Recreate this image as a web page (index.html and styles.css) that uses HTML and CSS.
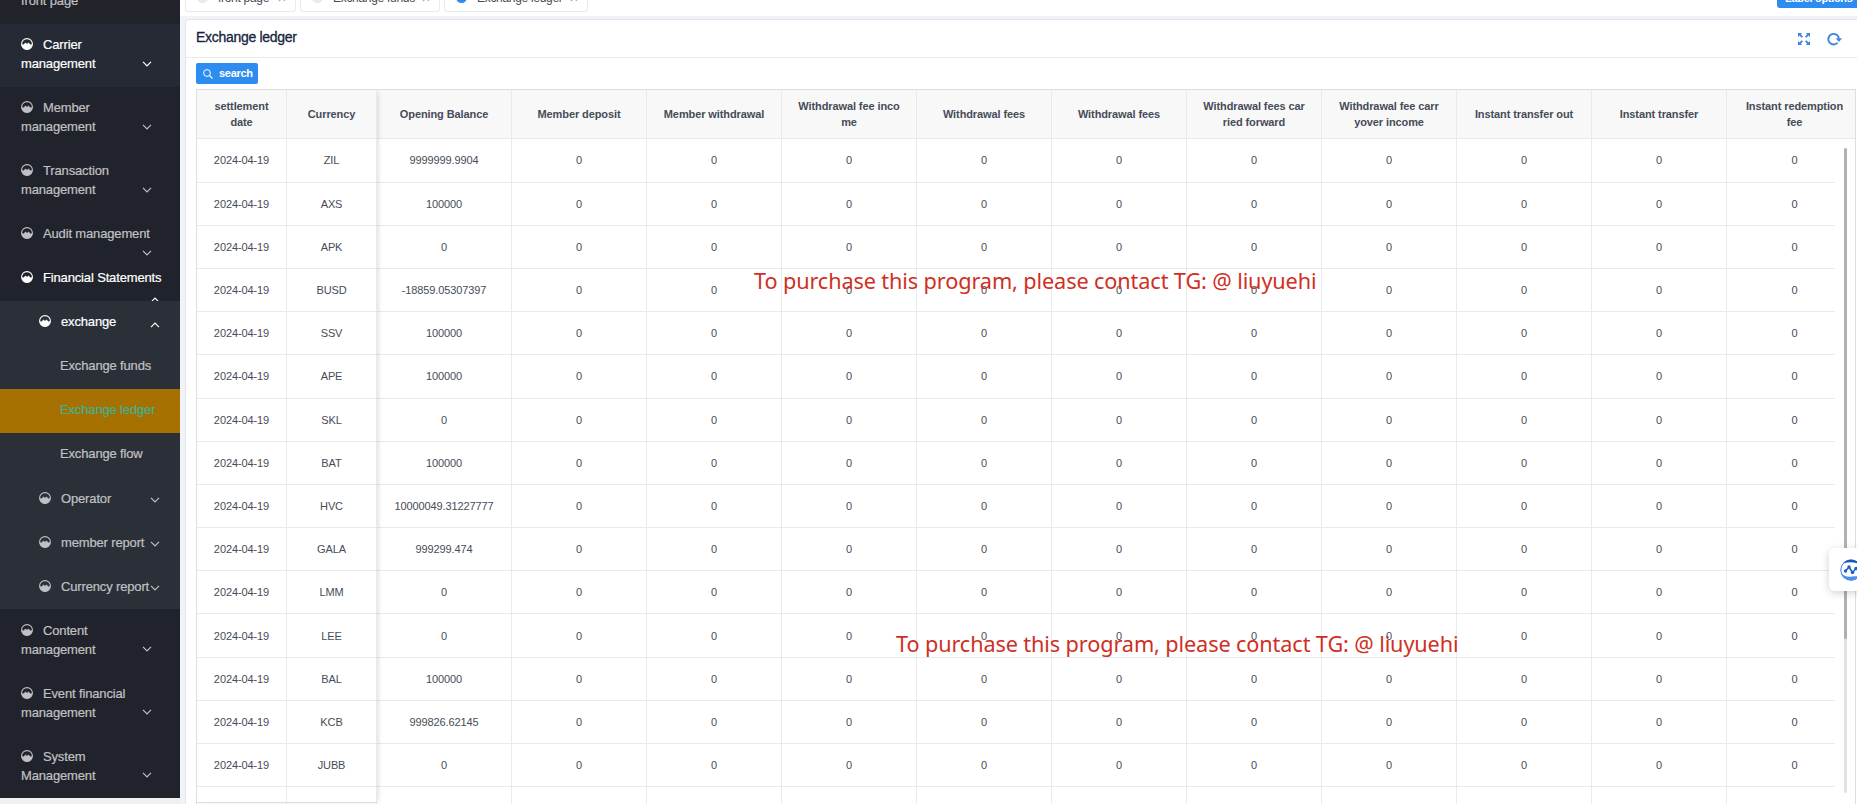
FILE: index.html
```html
<!DOCTYPE html>
<html lang="en">
<head>
<meta charset="utf-8">
<title>Exchange ledger</title>
<link rel="stylesheet" href="styles.css">
</head>
<body>
<svg class="defs" width="0" height="0">
  <symbol id="gauge" viewBox="0 0 12 12"><circle cx="6" cy="6" r="5.4" fill="none" stroke="currentColor" stroke-width="1.1"/><path d="M.6 6.2 2.8 6.4 4.2 4.8 5 4.8 6 6.2 7 4.8 7.8 4.8 9.2 6.4 11.4 6.2A5.4 5.4 0 0 1 .6 6.2Z" fill="currentColor"/></symbol>
  <symbol id="down" viewBox="0 0 10 6"><path d="M1 .8 5 4.8 9 .8" fill="none" stroke="currentColor" stroke-width="1.2"/></symbol>
  <symbol id="up" viewBox="0 0 10 6"><path d="M1 5.2 5 1.2 9 5.2" fill="none" stroke="currentColor" stroke-width="1.2"/></symbol>
</svg>
<div class="app">
  <nav class="sidebar" id="menu"></nav>
  <main class="main">
    <header class="tabs">
      <div class="tab tab-home"><i class="dot"></i><span>front page</span><b>×</b></div>
      <div class="tab tab-funds"><i class="dot"></i><span>Exchange funds</span><b>×</b></div>
      <div class="tab tab-ledger"><i class="dot on"></i><span>Exchange ledger</span><b>×</b></div>
      <button class="label-options">Label options</button>
    </header>
    <section class="card">
      <div class="card-head">
        <h1>Exchange ledger</h1>
        <svg class="expand" viewBox="0 0 12 12"><path d="M0 0H4L2.800 1.300 5 3.500 3.700 4.800 1.400 2.600 0 4ZM12 0V4L10.600 2.600 8.300 4.800 7 3.500 9.200 1.300 8 0ZM0 12V8L1.400 9.400 3.700 7.200 5 8.500 2.800 10.700 4 12ZM12 12H8L9.200 10.700 7 8.500 8.300 7.200 10.600 9.400 12 8Z" fill="currentColor"/></svg>
        <svg class="reload" viewBox="0 0 16 14"><path d="M11.400 11A5.700 5.700 0 1 1 12.800 6.500" fill="none" stroke="currentColor" stroke-width="2"/><path d="M9.400 6.200H16L12.700 10.200Z" fill="currentColor"/></svg>
      </div>
      <div class="card-body">
        <button class="search"><svg viewBox="0 0 10 10"><circle cx="4" cy="4" r="3.4" fill="none" stroke="currentColor"/><path d="M6.5 6.5 9.5 9.5" stroke="currentColor" stroke-width="1.1"/></svg><span>search</span></button>
        <div class="table" id="table"></div>
      </div>
    </section>
  </main>
</div>
<div class="notice notice-a">To purchase this program, please contact TG: @ liuyuehi</div>
<div class="notice notice-b">To purchase this program, please contact TG: @ liuyuehi</div>
<div class="scrollbar"><div class="thumb"></div></div>
<div class="widget"><svg viewBox="0 0 22 22"><circle cx="11" cy="11" r="10.2" fill="#fff" stroke="#3b7fe0" stroke-width="1"/><path d="M3 4.500A10.700 10.700 0 0 1 20 5.500Q12 1.500 3 4.500Z" fill="#1558c0"/><path d="M.8 14Q5 18.500 12 17.500 18 17 20 16.500A10.700 10.700 0 0 1 .8 14Z" fill="#4a90ee"/><path d="M5.500 12 9 8 12.500 13.500 16 9.500" fill="none" stroke="#1d5fc6" stroke-width="1.600"/><g fill="#1d5fc6"><circle cx="5.500" cy="12" r="1.700"/><circle cx="9" cy="8" r="1.700"/><circle cx="12.500" cy="13.500" r="1.700"/><circle cx="16" cy="9.500" r="1.700"/></g></svg></div>
<script src="app.js"></script>
</body>
</html>
```
FILE: styles.css
```css
* { box-sizing: border-box; }
body { margin: 0; height: 804px; overflow: hidden; position: relative; background: #f0f0f0; font-family: "Liberation Sans", Arial, sans-serif; color: #464c58; }
.defs { position: absolute; }
.app { display: flex; height: 804px; }

.sidebar { width: 180px; height: 798px; flex: none; overflow: hidden; background: #20232b; color: #c0c1c4; font-size: 13px; line-height: 19px; letter-spacing: -.15px; -webkit-text-stroke: .2px currentColor; }
.item { position: relative; padding: 11px 21px 14px; height: 63px; }
.item.home { height: 24px; padding: 0 0 0 21px; line-height: 1px; background: #202329; }
.item.single { height: 44px; padding-right: 0; white-space: nowrap; }
.item.hot { background: #262a34; color: #fff; }
.item.active { color: #fff; }
.item.active .arrow { right: 20px; top: 40px; height: 6px; }
.group ~ .item { padding-top: 12px; }
.gauge { width: 12px; height: 12px; margin-right: 10px; vertical-align: -1px; }
.arrow { position: absolute; width: 10px; height: 6px; right: 28px; top: 37px; }
.group { position: relative; background: #2b2f38; height: 308px; }
.sub { position: relative; height: 44px; padding: 11px 0 0 39px; white-space: nowrap; }
.sub .arrow { right: 20px; top: 20px; }
.sub.active { color: #fff; }
.sub.active .arrow { top: 21px; }
.leaf ~ .sub { padding-top: 12px; }
.leaf { height: 44px; padding: 11px 0 0 60px; }
.leaf.selected { background: #a67100; color: #3fb295; }

.main { flex: 1; min-width: 0; background: #f0f3f8; display: flex; flex-direction: column; }
.tabs { height: 16px; flex: none; background: #fff; display: flex; align-items: flex-end; padding: 0 0 4px 5px; gap: 4px; overflow: hidden; }
.tab { height: 32px; flex: none; border: 1px solid #e8eaec; border-radius: 3px; background: #fff; display: flex; align-items: center; font-size: 12px; letter-spacing: -.3px; padding: 3px 9px 0 11px; }
.tab-home { width: 111px; }
.tab-funds { width: 140px; }
.tab-ledger { width: 144px; }
.tab b { margin-left: auto; font-weight: 400; color: #a5abb5; font-size: 15px; }
.dot { width: 11px; height: 11px; border-radius: 50%; background: #e8eaec; margin-right: 10px; }
.dot.on { background: #2d8cf0; }
.label-options { flex: none; margin-left: auto; margin-bottom: 4px; height: 24px; width: 80px; padding: 3px 0 0 8px; text-align: left; white-space: nowrap; border: 0; border-radius: 3px 0 0 3px; background: #2d8cf0; color: #fff; font: bold 11px "Liberation Sans", Arial, sans-serif; letter-spacing: -.3px; }

.card { flex: 1; margin: 3px 0 0 5px; background: #fff; border: 1px solid #e3e5e9; border-right: 0; border-bottom: 0; border-radius: 4px 0 0 0; }
.card-head { height: 38px; display: flex; align-items: center; border-bottom: 1px solid #e8eaec; padding: 0 15px 0 10px; color: #3d85dc; }
.card-head h1 { margin: 0 auto 3px 0; font-size: 14px; font-weight: 400; letter-spacing: -.3px; color: #17233d; -webkit-text-stroke: .3px #17233d; }
.expand { width: 12px; height: 12px; margin-right: 17px; }
.reload { width: 15px; height: 14px; }
.card-body { padding: 5px 0 0 10px; }
.search { display: flex; align-items: center; gap: 6px; width: 62px; height: 21px; padding: 0 0 0 7px; border: 0; border-radius: 2px; background: #2d8cf0; color: #fff; font: bold 11px "Liberation Sans", Arial, sans-serif; letter-spacing: -.3px; }
.search span { padding-bottom: 1px; }
.search svg { width: 10px; height: 10px; flex: none; }

.table { position: relative; width: 1660px; height: 715px; margin-top: 5px; overflow: hidden; border: 1px solid #dcdee2; border-bottom: 0; font-size: 11px; letter-spacing: -.1px; }
.row { display: grid; grid-template-columns: 90px 90px repeat(11, 135px); width: 1638px; height: 43.2px; overflow: hidden; }
.row > div { border-right: 1px solid #e8eaec; border-bottom: 1px solid #e8eaec; display: flex; align-items: center; justify-content: center; text-align: center; }
.row.head { width: 1658px; height: 49.4px; background: #f8f8f9; font-weight: bold; line-height: 16px; }
.row > div:last-child { border-right: 0; }
.fixed-edge { position: absolute; left: 0; top: 0; width: 180px; height: 713px; border-bottom: 1px solid #dcdee2; box-shadow: 2px 0 6px -2px rgba(0,0,0,.2); }

.notice { position: absolute; color: #cf2f24; font: 21.7px/30px "Noto Sans", sans-serif; letter-spacing: -.12px; white-space: nowrap; }
.notice-a { left: 754px; top: 266px; }
.notice-b { left: 896px; top: 629px; }
.scrollbar { position: absolute; left: 1844px; top: 148px; width: 3px; height: 645px; background: #e2e2e2; border-radius: 2px; }
.thumb { height: 491px; background: #b0b0b0; border-radius: 2px; }
.widget { position: absolute; left: 1829px; top: 548px; width: 60px; height: 43px; background: #fff; border-radius: 6px; box-shadow: 0 2px 8px rgba(0,0,0,.18); padding: 11px; }
.widget svg { display: block; width: 22px; height: 22px; }
```
FILE: app.js
```js
const gauge = '<svg class="gauge"><use href="#gauge"/></svg>';
const arrow = d => `<svg class="arrow"><use href="#${d}"/></svg>`;
const item = (label, cls = '', dir = 'down') => `<div class="item ${cls}">${gauge}${label}${arrow(dir)}</div>`;
const sub = (label, dir = 'down', cls = '') => `<div class="sub ${cls}">${gauge}${label}${arrow(dir)}</div>`;
const leaf = (label, cls = '') => `<div class="leaf ${cls}">${label}</div>`;
document.getElementById('menu').innerHTML =
  '<div class="item home">front page</div>' +
  item('Carrier<br>management', 'hot') +
  item('Member<br>management') +
  item('Transaction<br>management') +
  item('Audit management', 'single') +
  item('Financial Statements', 'single active', 'up') +
  '<div class="group">' + sub('exchange', 'up', 'active') +
  leaf('Exchange funds') + leaf('Exchange ledger', 'selected') + leaf('Exchange flow') +
  sub('Operator') + sub('member report') + sub('Currency report') + '</div>' +
  item('Content<br>management') +
  item('Event financial<br>management') +
  item('System<br>Management');

const heads = ['settlement<br>date', 'Currency', 'Opening Balance', 'Member deposit', 'Member withdrawal',
  'Withdrawal fee inco<br>me', 'Withdrawal fees', 'Withdrawal fees', 'Withdrawal fees car<br>ried forward',
  'Withdrawal fee carr<br>yover income', 'Instant transfer out', 'Instant transfer', 'Instant redemption<br>fee'];
const rows = [['ZIL', '9999999.9904'], ['AXS', '100000'], ['APK', '0'], ['BUSD', '-18859.05307397'], ['SSV', '100000'],
  ['APE', '100000'], ['SKL', '0'], ['BAT', '100000'], ['HVC', '10000049.31227777'], ['GALA', '999299.474'],
  ['LMM', '0'], ['LEE', '0'], ['BAL', '100000'], ['KCB', '999826.62145'], ['JUBB', '0']];
const row = (cells, cls = '') => `<div class="row ${cls}">${cells.map(c => `<div>${c}</div>`).join('')}</div>`;
document.getElementById('table').innerHTML = row(heads, 'head') +
  rows.map(r => row(['2024-04-19', ...r, ...Array(10).fill('0')])).join('') +
  row(Array(13).fill('')) + '<div class="fixed-edge"></div>';
```
